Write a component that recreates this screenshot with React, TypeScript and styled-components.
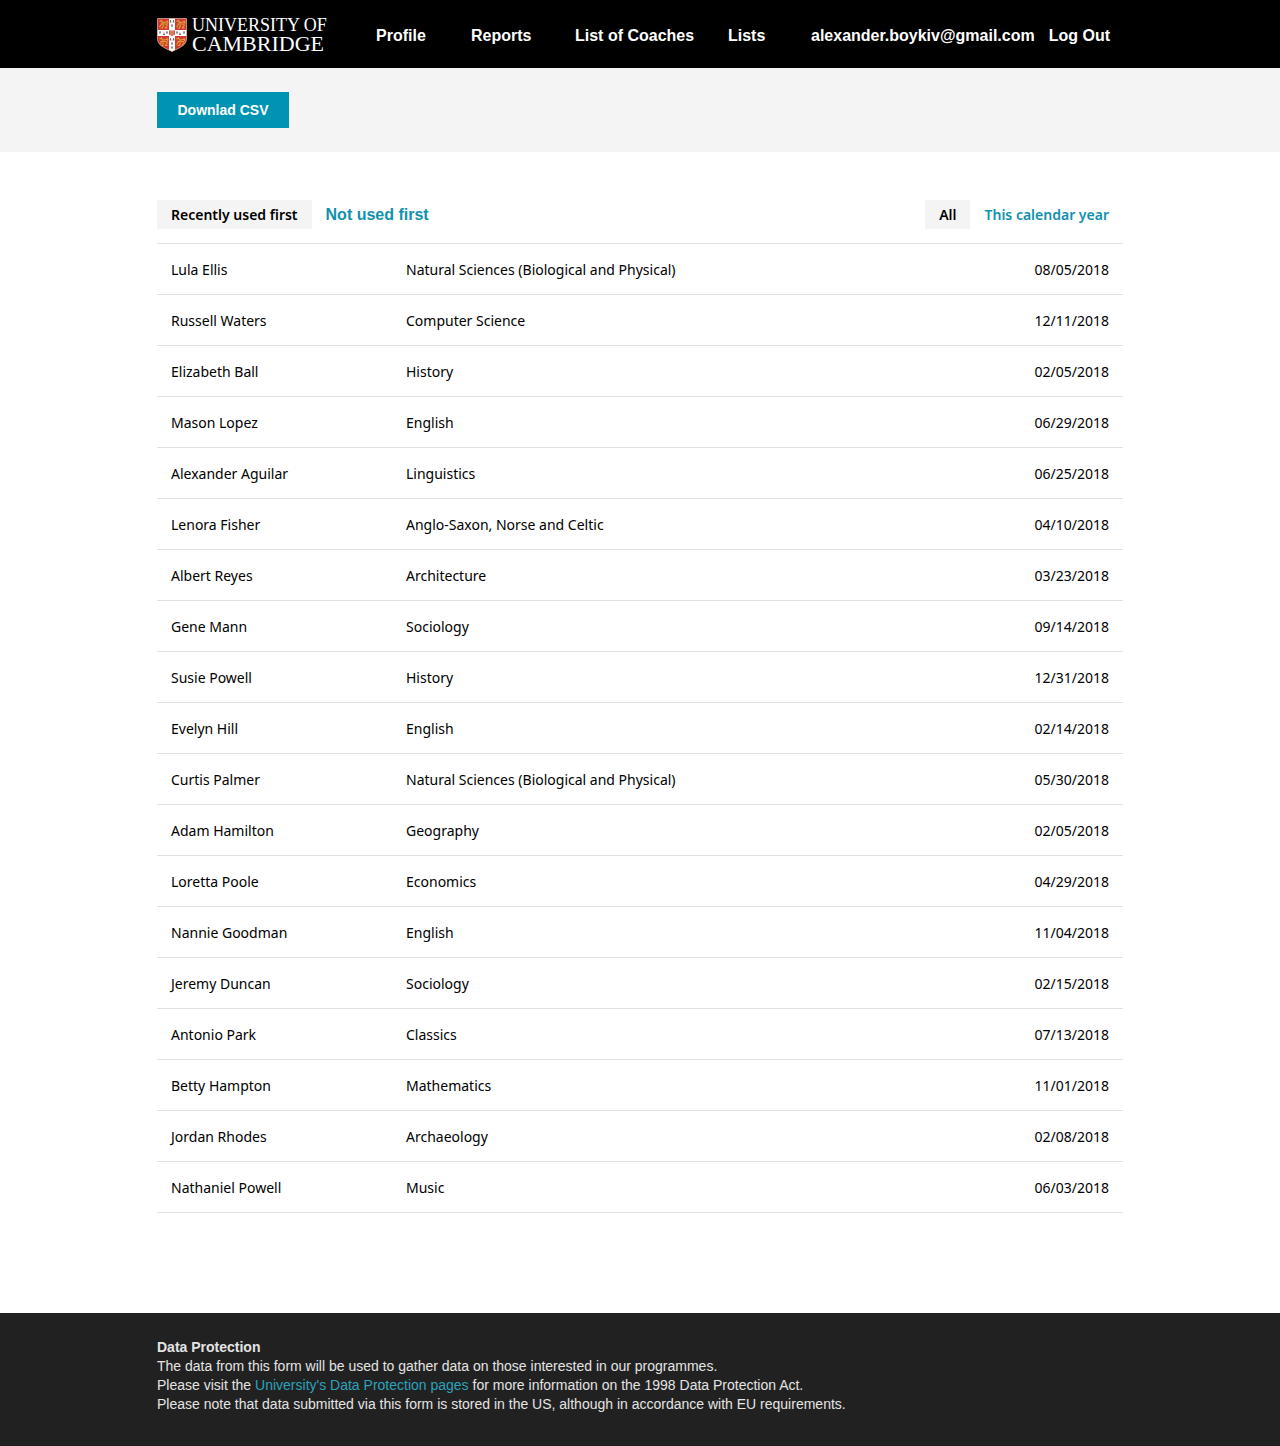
import React from "react";
import styled, { createGlobalStyle } from "styled-components";

const sans = `"Liberation Sans", Arial, sans-serif`;
const humanist = `"Noto Sans", "Open Sans", sans-serif`;
const teal = "#0f91ae";

const GlobalStyle = createGlobalStyle`
  *, *::before, *::after { box-sizing: border-box; }
  body { margin: 0; background: #fff; color: #000; font-family: ${sans}; }
`;

const Page = styled.div`
  display: flex;
  flex-direction: column;
  min-height: 100vh;
`;

const Container = styled.div`
  width: 100%;
  max-width: 994px;
  margin: 0 auto;
  padding: 0 14px;
`;

const Header = styled.header`
  background: #000;
`;

const HeaderRow = styled(Container)`
  display: flex;
  align-items: center;
  min-height: 68px;
  padding-top: 2px;
`;

const Brand = styled.a`
  display: flex;
  align-items: center;
  gap: 5px;
  width: 219px;
  color: #fff;
  text-decoration: none;
`;

const Crest = styled.svg`
  flex: none;
  width: 30px;
  height: 34px;
`;

const BrandName = styled.span`
  display: grid;
  padding-bottom: 2px;
  font-family: "Liberation Serif", "Times New Roman", serif;
  white-space: nowrap;
`;

const BrandTop = styled.span`
  font-size: 18px;
  line-height: 20px;
`;

const BrandBottom = styled.span`
  font-size: 22px;
  line-height: 18px;
`;

const MainNav = styled.nav`
  display: grid;
  grid-template-columns: 95px 104px 153px auto;
  padding-top: 2px;
`;

const AccountNav = styled.nav`
  display: flex;
  gap: 14px;
  margin-left: auto;
  padding: 2px 13px 0 0;
`;

const NavLink = styled.a`
  color: #fff;
  font-size: 16px;
  font-weight: 700;
  line-height: 20px;
  text-decoration: none;
  white-space: nowrap;
`;

const Toolbar = styled.section`
  padding: 24px 0;
  background: #f4f4f4;
`;

const DownloadButton = styled.button`
  display: block;
  min-width: 132px;
  height: 36px;
  padding: 0 20px;
  border: 0;
  background: #0094b3;
  color: #fff;
  font: 700 14px/20px ${sans};
  cursor: pointer;
`;

const Main = styled.main`
  flex: 1;
  padding: 48px 0 100px;
`;

const Filters = styled.div`
  display: flex;
  justify-content: space-between;
  padding-bottom: 14px;
`;

const FilterGroup = styled.div`
  display: flex;
`;

const FilterButton = styled.button<{ $active?: boolean; $plain?: boolean }>`
  height: 29px;
  padding: 0 14px;
  border: 0;
  background: ${(p) => (p.$active ? "#f4f4f4" : "transparent")};
  color: ${(p) => (p.$active ? "#000" : teal)};
  font-family: ${(p) => (p.$plain ? sans : humanist)};
  font-size: ${(p) => (p.$plain ? 16 : 14)}px;
  font-weight: ${(p) => (p.$plain ? 700 : 600)};
  line-height: 29px;
  cursor: pointer;
`;

const Table = styled.table`
  width: 100%;
  border-collapse: collapse;
  border-top: 1px solid #e1e1e1;
  font-family: ${humanist};
  font-size: 14px;
  line-height: 20px;
`;

const Row = styled.tr`
  border-bottom: 1px solid #e1e1e1;
`;

const Cell = styled.td<{ $width?: string; $align?: string }>`
  width: ${(p) => p.$width ?? "auto"};
  height: 51px;
  padding: 2px 14px 0;
  text-align: ${(p) => p.$align ?? "left"};
`;

const Footer = styled.footer`
  padding: 25px 0 31px;
  border-bottom: 1px solid #231a20;
  background: #212121;
  color: #e4e4e4;
  font-size: 14px;
  line-height: 19px;
`;

const FooterTitle = styled.h2`
  margin: 0;
  font-size: 14px;
  line-height: 19px;
`;

const FooterText = styled.p`
  margin: 0;
`;

const FooterLink = styled.a`
  color: #2ba3bb;
  text-decoration: none;
`;

const entries: [string, string, string][] = [
  ["Lula Ellis", "Natural Sciences (Biological and Physical)", "08/05/2018"],
  ["Russell Waters", "Computer Science", "12/11/2018"],
  ["Elizabeth Ball", "History", "02/05/2018"],
  ["Mason Lopez", "English", "06/29/2018"],
  ["Alexander Aguilar", "Linguistics", "06/25/2018"],
  ["Lenora Fisher", "Anglo-Saxon, Norse and Celtic", "04/10/2018"],
  ["Albert Reyes", "Architecture", "03/23/2018"],
  ["Gene Mann", "Sociology", "09/14/2018"],
  ["Susie Powell", "History", "12/31/2018"],
  ["Evelyn Hill", "English", "02/14/2018"],
  ["Curtis Palmer", "Natural Sciences (Biological and Physical)", "05/30/2018"],
  ["Adam Hamilton", "Geography", "02/05/2018"],
  ["Loretta Poole", "Economics", "04/29/2018"],
  ["Nannie Goodman", "English", "11/04/2018"],
  ["Jeremy Duncan", "Sociology", "02/15/2018"],
  ["Antonio Park", "Classics", "07/13/2018"],
  ["Betty Hampton", "Mathematics", "11/01/2018"],
  ["Jordan Rhodes", "Archaeology", "02/08/2018"],
  ["Nathaniel Powell", "Music", "06/03/2018"],
];

const shield = "M.5.5h29v21c0 6.500-11 10-14.500 12C11.500 31.500.5 28 .5 21.500Z";

const Lion = ({ x, y }: { x: number; y: number }) => (
  <g transform={`translate(${x} ${y})`} fill="none" stroke="#e0a030" strokeWidth="1.200">
    <path d="M1 2l2-1 1 2 4-.5 1-1.500M2 4.500h6l1 2M3 5l-2 2.500M5 5.500L4 8.500H2M8 6.500l-1 2h2M9 4l.5-2" />
  </g>
);

const Ermine = ({ x, y }: { x: number; y: number }) => (
  <path d={`M${x} ${y}v2M${x - 1} ${y + 2}h2`} stroke="#555" strokeWidth=".8" />
);

const ermineSpots = [
  [13.5, 2], [16.5, 2], [15, 6], [3, 13], [7, 14.5], [10, 13],
  [20, 13], [23, 14.5], [27, 13], [13.5, 20], [16.5, 20], [15, 24], [15, 28],
];

function CrestMark() {
  return (
    <Crest viewBox="0 0 30 34" aria-hidden="true">
      <defs>
        <clipPath id="shield"><path d={shield} /></clipPath>
      </defs>
      <g clipPath="url(#shield)">
        <rect width="30" height="34" fill="#d03a34" />
        <Lion x={1.5} y={1.5} />
        <Lion x={18.5} y={1.5} />
        <Lion x={1.5} y={19} />
        <Lion x={18.5} y={19} />
        <path d="M12 0h6v34h-6zM0 12h30v6H0z" fill="#fff" />
        {ermineSpots.map(([x, y]) => <Ermine key={`${x}-${y}`} x={x} y={y} />)}
        <path d="M12 12.500h6v4l-3 1.500-3-1.500z" fill="#c9503c" />
        <path d="M13 14h4M13 16h4" stroke="#f3cfae" strokeWidth=".7" />
      </g>
      <path d={shield} fill="none" stroke="#e9b9a8" strokeWidth=".7" />
    </Crest>
  );
}

export default function App() {
  return (
    <>
      <GlobalStyle />
      <Page>
        <Header>
          <HeaderRow>
            <Brand href="#">
              <CrestMark />
              <BrandName>
                <BrandTop>UNIVERSITY OF</BrandTop>
                <BrandBottom>CAMBRIDGE</BrandBottom>
              </BrandName>
            </Brand>
            <MainNav aria-label="Main">
              <NavLink href="#">Profile</NavLink>
              <NavLink href="#">Reports</NavLink>
              <NavLink href="#">List of Coaches</NavLink>
              <NavLink href="#">Lists</NavLink>
            </MainNav>
            <AccountNav aria-label="Account">
              <NavLink href="#">alexander.boykiv@gmail.com</NavLink>
              <NavLink href="#">Log Out</NavLink>
            </AccountNav>
          </HeaderRow>
        </Header>
        <Toolbar>
          <Container>
            <DownloadButton type="button">Downlad CSV</DownloadButton>
          </Container>
        </Toolbar>
        <Main>
          <Container>
            <Filters>
              <FilterGroup>
                <FilterButton type="button" $active>Recently used first</FilterButton>
                <FilterButton type="button" $plain>Not used first</FilterButton>
              </FilterGroup>
              <FilterGroup>
                <FilterButton type="button" $active>All</FilterButton>
                <FilterButton type="button">This calendar year</FilterButton>
              </FilterGroup>
            </Filters>
            <Table>
              <tbody>
                {entries.map(([name, subject, date]) => (
                  <Row key={name}>
                    <Cell $width="235px">{name}</Cell>
                    <Cell>{subject}</Cell>
                    <Cell $width="160px" $align="right">{date}</Cell>
                  </Row>
                ))}
              </tbody>
            </Table>
          </Container>
        </Main>
        <Footer>
          <Container>
            <FooterTitle>Data Protection</FooterTitle>
            <FooterText>The data from this form will be used to gather data on those interested in our programmes.</FooterText>
            <FooterText>
              Please visit the <FooterLink href="#">University's Data Protection pages</FooterLink> for more information on the 1998 Data Protection Act.
            </FooterText>
            <FooterText>Please note that data submitted via this form is stored in the US, although in accordance with EU requirements.</FooterText>
          </Container>
        </Footer>
      </Page>
    </>
  );
}
